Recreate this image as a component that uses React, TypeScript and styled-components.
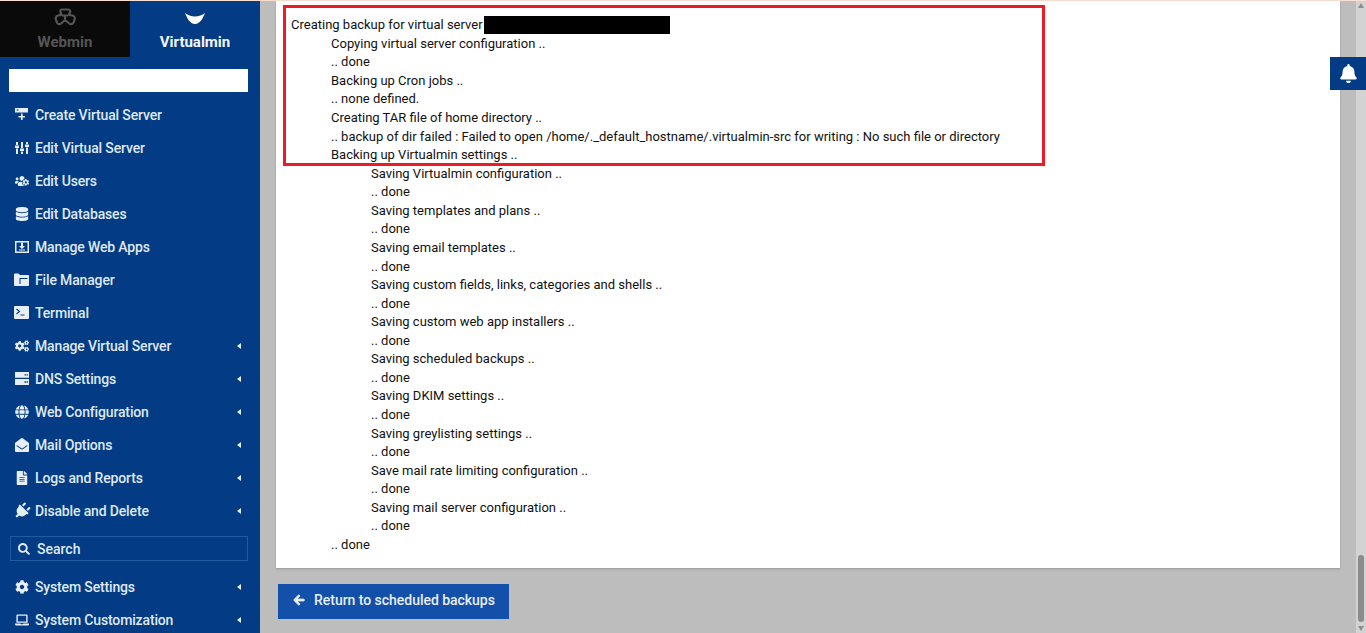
import React from 'react';
import styled, { createGlobalStyle } from 'styled-components';
import {
  FaArrowLeft,
  FaBell,
  FaCog,
  FaCogs,
  FaDatabase,
  FaEnvelopeOpen,
  FaFileAlt,
  FaGlobe,
  FaLaptop,
  FaPlug,
  FaSearch,
  FaUsersCog,
} from 'react-icons/fa';

const GlobalStyle = createGlobalStyle`
  html, body {
    margin: 0;
    height: 100%;
    overflow: hidden;
    background: #bdbdbd;
    font-family: Roboto, "Liberation Sans", sans-serif;
  }
`;

const Page = styled.div`
  position: relative;
  width: 1366px;
  height: 633px;
  overflow: hidden;
  display: flex;
  flex-direction: column;
`;

const TopStrip = styled.div`
  height: 1px;
  flex: none;
  background: #f9e0d3;
`;

const Body = styled.div`
  flex: 1;
  display: flex;
  min-height: 0;
`;

const Sidebar = styled.aside`
  width: 260px;
  flex: none;
  background: #033c84;
  display: flex;
  flex-direction: column;
  overflow: hidden;
`;

const Tabs = styled.div`
  display: flex;
  height: 56px;
  flex: none;
`;

const Tab = styled.div<{ $active?: boolean }>`
  width: 130px;
  display: flex;
  flex-direction: column;
  align-items: center;
  padding-top: 6px;
  box-sizing: border-box;
  background: ${props => (props.$active ? '#033c84' : '#0a0a0a')};
  color: ${props => (props.$active ? '#f4f7fb' : '#555555')};
  font-size: 15px;
  font-weight: 700;
  line-height: 17px;
`;

const TabIcon = styled.svg`
  width: 24px;
  height: 20px;
  margin-bottom: 7px;
  flex: none;
`;

const FilterInput = styled.div`
  height: 23px;
  margin: 12px 12px 6px 9px;
  background: #ffffff;
  flex: none;
`;

const Menu = styled.nav`
  display: flex;
  flex-direction: column;
  flex: none;
`;

const MenuRow = styled.div`
  height: 33px;
  display: flex;
  align-items: center;
  padding: 0 19.5px 0 14px;
  color: #dfe8f3;
  font-size: 14px;
  font-weight: 500;
  letter-spacing: -0.15px;
`;

const IconSlot = styled.span`
  width: 15px;
  height: 15px;
  margin-right: 6px;
  flex: none;
  display: flex;
  align-items: center;
  justify-content: center;
  color: #e8eef6;
  font-size: 14px;
`;

const MenuLabel = styled.span`
  flex: 1;
  white-space: nowrap;
`;

const Caret = styled.span`
  width: 0;
  height: 0;
  border-top: 3.5px solid transparent;
  border-bottom: 3.5px solid transparent;
  border-right: 4.5px solid #e8eef6;
`;

const SearchBox = styled.div`
  height: 25px;
  margin: 9px 12px 9px 10px;
  border: 1px solid #23599f;
  box-sizing: border-box;
  display: flex;
  align-items: center;
  padding-left: 7px;
  color: #dfe8f3;
  font-size: 14px;
  font-weight: 500;
  gap: 7px;
  flex: none;
`;

const SlantedPlug = styled(FaPlug)`
  transform: rotate(45deg) scale(1.2);
`;

const Main = styled.main`
  flex: 1;
  display: flex;
  flex-direction: column;
  padding: 0 26px 0 16px;
  min-width: 0;
`;

const LogPanel = styled.section`
  position: relative;
  height: 567px;
  flex: none;
  box-sizing: border-box;
  padding: 15.2px 15px 0;
  background: #ffffff;
  box-shadow: 0 1px 2px rgba(0, 0, 0, 0.2);
  font-size: 13px;
  line-height: 18.57px;
  color: #111111;
`;

const LogLine = styled.div<{ $level: number }>`
  margin-left: ${props => props.$level * 40}px;
  white-space: nowrap;
`;

const Redacted = styled.span`
  display: inline-block;
  width: 186px;
  height: 18px;
  margin-left: 1px;
  vertical-align: top;
  background: #000000;
`;

const Highlight = styled.div`
  position: absolute;
  left: 7px;
  top: 4px;
  width: 762px;
  height: 161px;
  box-sizing: border-box;
  border: 3px solid #ed1c24;
  pointer-events: none;
`;

const ReturnButton = styled.button`
  align-self: flex-start;
  height: 35px;
  width: 231px;
  margin: 16px 0 0 2px;
  padding: 0 0 3px 15px;
  border: 0;
  display: flex;
  align-items: center;
  gap: 9px;
  background: #1350a9;
  color: #e8eef6;
  font-family: inherit;
  font-size: 14px;
  font-weight: 500;
  letter-spacing: -0.03px;
`;

const BoldArrow = styled(FaArrowLeft)`
  stroke: currentColor;
  stroke-width: 36px;
`;

const BellTab = styled.div`
  position: absolute;
  top: 57px;
  right: 0;
  width: 36px;
  height: 33px;
  background: #033c84;
  color: #ffffff;
  display: flex;
  align-items: center;
  justify-content: center;
  font-size: 19px;
  z-index: 2;
`;

const ScrollTrack = styled.div`
  position: absolute;
  top: 1px;
  right: 0;
  bottom: 0;
  width: 10px;
  background: #d3d3d3;
`;

const ScrollThumb = styled.div`
  position: absolute;
  top: 554px;
  left: 2px;
  width: 6px;
  height: 67px;
  border-radius: 3px;
  background: #8c8c8c;
`;

const ScrollArrow = styled.span<{ $down?: boolean }>`
  position: absolute;
  left: 2px;
  ${props => (props.$down ? 'bottom: 2px;' : 'top: 2px;')}
  width: 0;
  height: 0;
  border-left: 3px solid transparent;
  border-right: 3px solid transparent;
  ${props => (props.$down ? 'border-top: 5px solid #8c8c8c;' : 'border-bottom: 5px solid #8c8c8c;')}
`;

const SlidersIcon = () => (
  <svg width="14" height="14" viewBox="0 0 14 14" fill="currentColor">
    <path d="M1 1h2v3H1zM0 4.500h4v2.500H0zM1 7.500h2V13H1zM6 1h2v6H6zM5 7.500h4V10H5zM6 10.500h2V13H6zM11 1h2v2h-2zM10 3.500h4V6h-4zM11 6.500h2V13h-2z" />
  </svg>
);

const CreateServerIcon = () => (
  <svg width="14" height="14" viewBox="0 0 14 14" fill="currentColor">
    <path fillRule="evenodd" d="M0 0h13v4.500H0zM1.500 1.500v1h2v-1z" />
    <path d="M6 5.500h1.600V8H10v1.500H7.600V12H6V9.500H3.500V8H6z" />
  </svg>
);

const AppsIcon = () => (
  <svg width="14" height="13" viewBox="0 0 14 13" fill="currentColor">
    <path fillRule="evenodd" d="M0 1h14v12H0zM1.500 2.500v9h11v-9z" />
    <path d="M6 2.500h2V6h2L7 9 4 6h2zM4 9.500h6V10.500H4z" />
  </svg>
);

const FolderIcon = () => (
  <svg width="15" height="13" viewBox="0 0 15 13" fill="currentColor">
    <path d="M0 1.500C0 .8.500.500 1 .500h3.500l1.500 1.500h8c.6 0 1 .4 1 1V12c0 .5-.4 1-1 1H1c-.6 0-1-.5-1-1z" />
    <path d="M5.500 5h8v1H6.500v5h-1z" fill="#033c84" />
  </svg>
);

const TerminalIcon = () => (
  <svg width="15" height="13" viewBox="0 0 15 13">
    <rect width="15" height="13" rx="1" fill="currentColor" />
    <path d="M2.500 3l3 2.500-3 2.500M6.500 9h4" fill="none" stroke="#033c84" strokeWidth="1.100" />
  </svg>
);

const DnsIcon = () => (
  <svg width="14" height="13" viewBox="0 0 14 13" fill="currentColor">
    <path fillRule="evenodd" d="M0 0h14v5.800H0zM9.500 2.200v1.400h1.400V2.200zM11.500 2.200v1.400h1.400V2.200z" />
    <path fillRule="evenodd" d="M0 7h14v6H0zM9.500 9.300v1.400h1.400V9.300zM11.500 9.300v1.400h1.400V9.300z" />
  </svg>
);

const WebminLogo = () => (
  <TabIcon viewBox="0 0 24 20" fill="none" stroke="#555555" strokeWidth="2.200" strokeLinejoin="round">
    <path d="M8.500 2.500h7c1.500 0 2 1.500 1.500 3l-1 2.500 3.500.5c2 .5 2.800 2.500 2 4.500l-1 2.500c-.8 1.800-2.800 2.200-4.200 1L12 13l-3.800 3.500c-1.400 1.200-3.400.8-4.200-1l-1-2.500c-.8-2 0-4 2-4.500L8.500 8l-1-2.500c-.5-1.500 0-3 1-3z" />
    <path d="M9 8.500h6M12 9v3" />
  </TabIcon>
);

const VirtualminLogo = () => (
  <TabIcon viewBox="0 0 24 20" fill="#ffffff">
    <path d="M2 6c3 2 6 3.500 10 3.500S19 8 22 6c-2 5-5 11-10 11S4 11 2 6z" />
  </TabIcon>
);

type MenuItem = { label: string; icon: React.ReactNode; sub?: boolean };

const topItems: MenuItem[] = [
  { label: 'Create Virtual Server', icon: <CreateServerIcon /> },
  { label: 'Edit Virtual Server', icon: <SlidersIcon /> },
  { label: 'Edit Users', icon: <FaUsersCog /> },
  { label: 'Edit Databases', icon: <FaDatabase /> },
  { label: 'Manage Web Apps', icon: <AppsIcon /> },
  { label: 'File Manager', icon: <FolderIcon /> },
  { label: 'Terminal', icon: <TerminalIcon /> },
  { label: 'Manage Virtual Server', icon: <FaCogs />, sub: true },
  { label: 'DNS Settings', icon: <DnsIcon />, sub: true },
  { label: 'Web Configuration', icon: <FaGlobe />, sub: true },
  { label: 'Mail Options', icon: <FaEnvelopeOpen />, sub: true },
  { label: 'Logs and Reports', icon: <FaFileAlt />, sub: true },
  { label: 'Disable and Delete', icon: <SlantedPlug />, sub: true },
];

const bottomItems: MenuItem[] = [
  { label: 'System Settings', icon: <FaCog />, sub: true },
  { label: 'System Customization', icon: <FaLaptop />, sub: true },
];

const logLines: [number, string][] = [
  [1, 'Copying virtual server configuration ..'],
  [1, '.. done'],
  [1, 'Backing up Cron jobs ..'],
  [1, '.. none defined.'],
  [1, 'Creating TAR file of home directory ..'],
  [1, '.. backup of dir failed : Failed to open /home/._default_hostname/.virtualmin-src for writing : No such file or directory'],
  [1, 'Backing up Virtualmin settings ..'],
  [2, 'Saving Virtualmin configuration ..'],
  [2, '.. done'],
  [2, 'Saving templates and plans ..'],
  [2, '.. done'],
  [2, 'Saving email templates ..'],
  [2, '.. done'],
  [2, 'Saving custom fields, links, categories and shells ..'],
  [2, '.. done'],
  [2, 'Saving custom web app installers ..'],
  [2, '.. done'],
  [2, 'Saving scheduled backups ..'],
  [2, '.. done'],
  [2, 'Saving DKIM settings ..'],
  [2, '.. done'],
  [2, 'Saving greylisting settings ..'],
  [2, '.. done'],
  [2, 'Save mail rate limiting configuration ..'],
  [2, '.. done'],
  [2, 'Saving mail server configuration ..'],
  [2, '.. done'],
  [1, '.. done'],
];

const renderItems = (items: MenuItem[]) =>
  items.map(item => (
    <MenuRow key={item.label}>
      <IconSlot>{item.icon}</IconSlot>
      <MenuLabel>{item.label}</MenuLabel>
      {item.sub && <Caret />}
    </MenuRow>
  ));

const App: React.FC = () => {
  return (
    <Page>
      <GlobalStyle />
      <TopStrip />
      <Body>
        <Sidebar>
          <Tabs>
            <Tab>
              <WebminLogo />
              Webmin
            </Tab>
            <Tab $active>
              <VirtualminLogo />
              Virtualmin
            </Tab>
          </Tabs>
          <FilterInput />
          <Menu>{renderItems(topItems)}</Menu>
          <SearchBox>
            <FaSearch size={12} />
            Search
          </SearchBox>
          <Menu>{renderItems(bottomItems)}</Menu>
        </Sidebar>
        <Main>
          <LogPanel>
            <LogLine $level={0}>
              Creating backup for virtual server
              <Redacted />
            </LogLine>
            {logLines.map(([level, text], i) => (
              <LogLine key={i} $level={level}>
                {text}
              </LogLine>
            ))}
            <Highlight />
          </LogPanel>
          <ReturnButton>
            <BoldArrow size={12} />
            Return to scheduled backups
          </ReturnButton>
        </Main>
      </Body>
      <ScrollTrack>
        <ScrollArrow />
        <ScrollThumb />
        <ScrollArrow $down />
      </ScrollTrack>
      <BellTab>
        <FaBell />
      </BellTab>
    </Page>
  );
};

export default App;
